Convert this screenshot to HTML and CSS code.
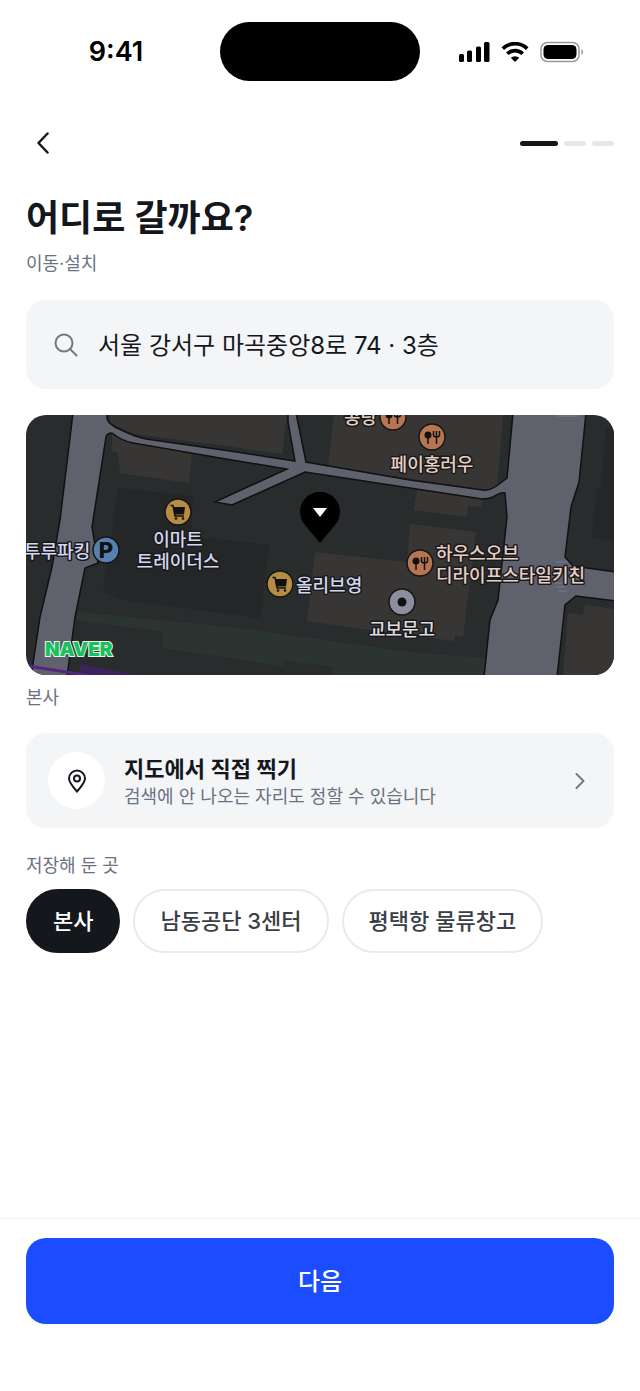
FILE: index.html
```html
<!DOCTYPE html>
<html lang="ko">
<head>
    <meta charset="UTF-8">
    <meta name="viewport" content="width=device-width, initial-scale=1.0">
    <title>어디로 갈까요?</title>
    <link rel="stylesheet" href="styles.css">
</head>
<body>
    <div class="status-bar">
        <span class="time">9:41</span>
        <div class="island"></div>
        <div class="status-icons">
            <svg width="32" height="20" viewBox="0 0 32 20">
                <rect x="1" y="12" width="5" height="8" rx="1.5"/>
                <rect x="9" y="8.5" width="5" height="11.5" rx="1.5"/>
                <rect x="18" y="4.5" width="5" height="15.5" rx="1.5"/>
                <rect x="26" y="0" width="5.5" height="20" rx="1.5"/>
            </svg>
            <svg width="28" height="20" viewBox="0 0 28 20">
                <g fill="none" stroke="#000" stroke-width="3.7">
                    <path d="M1.8 6.6 A17.5 17.5 0 0 1 26.200 6.600"/>
                    <path d="M6.3 11.8 A11 11 0 0 1 21.7 11.8"/>
                </g>
                <path d="M14 20 L9.8 15.8 A6.2 6.2 0 0 1 18.2 15.8 Z"/>
            </svg>
            <svg width="44" height="22" viewBox="0 0 44 22">
                <rect x="1" y="1.5" width="38" height="19" rx="6.5" fill="none" stroke="#999" stroke-width="1.5"/>
                <rect x="3.5" y="4" width="33" height="14" rx="4.5"/>
                <path d="M41.5 8 C43.600 9 43.600 13 41.500 14 Z" fill="#999"/>
            </svg>
        </div>
    </div>

    <header class="header">
        <button class="back-button" aria-label="뒤로">
            <svg width="14" height="22" viewBox="0 0 14 22"><path d="M10.500 1.500 L1.500 11 L10.500 20.500"/></svg>
        </button>
        <div class="steps">
            <span class="step active"></span>
            <span class="step"></span>
            <span class="step"></span>
        </div>
    </header>

    <main class="content">
        <h1>어디로 갈까요?</h1>
        <p class="caption subtitle">이동·설치</p>

        <label class="search-box">
            <svg width="24" height="24" viewBox="0 0 24 24"><circle cx="10" cy="10" r="8.500"/><path d="M16 16 L22.500 22.500"/></svg>
            <input type="text" value="서울 강서구 마곡중앙8로 74 · 3층" aria-label="주소 검색">
        </label>

        <div class="map">
            <svg viewBox="0 0 588 260" preserveAspectRatio="xMidYMid slice" role="img" aria-label="지도">
                <defs>
                    <g id="cart">
                        <circle class="marker" r="13"/>
                        <path class="glyph-line" d="M-7.500 -6.500 H-5 L-3 4 H6"/>
                        <path class="glyph" d="M-5 -5 H7 L6 2.500 H-3.500 Z"/>
                        <circle class="glyph" cx="-2" cy="6.500" r="1.300"/>
                        <circle class="glyph" cx="5" cy="6.500" r="1.300"/>
                    </g>
                    <g id="food">
                        <circle class="marker" r="13"/>
                        <circle class="glyph" cx="-4" cy="-2" r="3.500"/>
                        <path class="glyph-line" d="M-4 0 V7 M4.500 -1 V7 M1.500 -6 V-2 Q1.500 0 4.500 0 Q7.500 0 7.500 -2 V-6 M4.500 -6 V0"/>
                    </g>
                </defs>
                <rect width="588" height="260" fill="#292c2d"/>

                <!-- 건물 -->
                <path class="block-dark" d="M92 73 L167 81 L165 121 L243 130 L234 203 L97 185 L77 177 Z"/>
                <path class="block-dark" d="M580 13 L588 14 V125 L566 123 L571 72 L575 72 Z"/>
                <path class="building" d="M84 0 H261 L256 39 L200 31 L109 19 L84 8 Z"/>
                <path class="building" d="M86 18 L107 28 L166 38 L163 68 L94 58 L92 38 L86 37 Z"/>
                <path class="building" d="M308 0 H477 L471 72 L457 75 L302 51 Z"/>
                <path class="building" d="M391 74 L456 84 L456 92 L442 91 L441 102 L388 95 Z"/>
                <path class="building" d="M289 137 L381 147 L384 109 L450 117 L437 222 L429 220 L428 226 L343 215 L281 206 Z"/>
                <path class="building" d="M542 198 L557 200 L559 190 L588 194 V260 H537 Z"/>
                <path class="green" d="M52 197 L204 212 L384 237 L459 243 V260 H306 L307 252 L258 245 L257 251 L137 233 V217 L50 205 Z"/>

                <!-- 도로 -->
                <path class="road" d="M47 -2 L34 105 L26 152 L14 202 L5 262 H41 L49 202 L59 153 L72 148 L66 112 L80 22 Q81 18 86 18 Q96 26 107 28 L194 43 L261 54 L204 80 L189 87 L206 90 L279 57 L384 73 L456 84 Q462 84 467 82 Q475 77 479 78 L481 102 L472 185 L464 205 L458 262 H531 L539 190 L550 181 L590 186 V157 L547 151 L539 142 L545 92 L553 67 L560 -2 H487 L481 63 L469 72 Q463 76 457 75 L384 65 L280 47 L270 -2 H262 L262 7 L269 46 L204 36 L120 24 Q109 22 89 12 Q81 7 81 3 V-2 Z"/>
                <path class="crossing" d="M530 147 H542 M532 151 H545 M530 155 H540 M529 168 H540 M530 172 H539 M532 176 H541 M531 1 H552"/>
                <path class="subway" d="M54 249 L122 262 H54 Z"/>
                <path class="subway-line" d="M2 251 L65 261"/>

                <!-- 장소 -->
                <g class="poi shop">
                    <use href="#cart" x="152" y="97"/>
                    <text class="middle" x="152" y="131">이마트</text>
                    <text class="middle" x="152" y="153">트레이더스</text>
                    <use href="#cart" x="254" y="169"/>
                    <text x="270" y="177">올리브영</text>
                </g>
                <g class="poi parking">
                    <circle class="marker" cx="80" cy="135" r="13"/>
                    <text class="letter" x="80" y="143">P</text>
                    <text x="-2" y="143">투루파킹</text>
                </g>
                <g class="poi restaurant">
                    <use href="#food" x="367" y="2"/>
                    <text x="318" y="9">콩탕</text>
                    <use href="#food" x="406" y="22"/>
                    <text class="middle" x="406" y="56">페이홍러우</text>
                    <use href="#food" x="394" y="148"/>
                    <text x="410" y="145">하우스오브</text>
                    <text x="410" y="167">디라이프스타일키친</text>
                </g>
                <g class="poi place">
                    <circle class="marker" cx="376" cy="187" r="13"/>
                    <circle class="glyph" cx="376" cy="187" r="4.500"/>
                    <text class="middle" x="376" y="221">교보문고</text>
                </g>

                <path d="M294 128 L279 110 A20 20 0 1 1 309 110 Z" fill="#000"/>
                <path d="M287 93 H301 L294 102 Z" fill="#fff"/>
                <text class="naver" x="19" y="241">NAVER</text>
            </svg>
        </div>
        <p class="caption map-caption">본사</p>

        <button class="pick-card">
            <span class="pick-icon">
                <svg width="20" height="24" viewBox="0 0 20 24"><path d="M10 22.500 C6 18 2 13.500 2 9.500 A8 8 0 0 1 18 9.500 C18 13.500 14 18 10 22.500 Z"/><circle cx="10" cy="9.500" r="3"/></svg>
            </span>
            <span class="pick-text">
                <strong>지도에서 직접 찍기</strong>
                <span class="caption">검색에 안 나오는 자리도 정할 수 있습니다</span>
            </span>
            <svg class="chevron" width="10" height="18" viewBox="0 0 10 18"><path d="M1.500 2 L8.500 9 L1.500 16"/></svg>
        </button>

        <p class="caption saved-title">저장해 둔 곳</p>
        <div class="chips">
            <button class="chip selected">본사</button>
            <button class="chip">남동공단 3센터</button>
            <button class="chip">평택항 물류창고</button>
        </div>
    </main>

    <footer class="footer">
        <button class="next-button">다음</button>
    </footer>
</body>
</html>
```
FILE: styles.css
```css
* {
    box-sizing: border-box;
}
body {
    display: flex;
    flex-direction: column;
    min-height: 100vh;
    margin: 0;
    background-color: #fff;
    color: #14181d;
    font-family: Inter, 'Noto Sans CJK KR', sans-serif;
}
h1, p {
    margin: 0;
}
button, input {
    font-family: inherit;
    color: inherit;
}
button {
    padding: 0;
    border: none;
    cursor: pointer;
}
svg {
    display: block;
    flex: none;
}
.status-bar {
    display: grid;
    grid-template-columns: 1fr 200px 1fr;
    align-items: center;
    padding: 22px 0;
    color: #000;
}
.time {
    padding-left: 12px;
    text-align: center;
    font-size: 27px;
    font-weight: 600;
}
.island {
    height: 59px;
    border-radius: 30px;
    background-color: #000;
}
.status-icons {
    display: flex;
    justify-content: center;
    align-items: center;
    gap: 11px;
    padding-right: 18px;
}
.header {
    display: flex;
    justify-content: space-between;
    align-items: center;
    height: 48px;
    margin-top: 16px;
    padding: 0 26px;
}
.back-button {
    display: flex;
    align-items: center;
    justify-content: center;
    width: 36px;
    height: 48px;
    background: none;
}
.back-button path {
    fill: none;
    stroke: #14181d;
    stroke-width: 2.5;
    stroke-linecap: round;
    stroke-linejoin: round;
}
.steps {
    display: flex;
    gap: 6px;
}
.step {
    width: 22px;
    height: 5px;
    border-radius: 3px;
    background-color: #e6e7ea;
}
.step.active {
    width: 38px;
    background-color: #14181d;
}
.content {
    flex: 1;
    padding: 27px 26px 24px;
}
h1 {
    font-size: 36px;
    font-weight: 600;
    line-height: 48px;
}
.caption {
    color: #6b7280;
    font-size: 18px;
    font-weight: 400;
    line-height: 24px;
}
.subtitle {
    margin-top: 10px;
}
.search-box {
    display: flex;
    align-items: center;
    gap: 20px;
    height: 89px;
    margin-top: 24px;
    padding: 0 28px;
    border-radius: 20px;
    background-color: #f3f5f7;
}
.search-box svg {
    fill: none;
    stroke: #737982;
    stroke-width: 2;
    stroke-linecap: round;
}
.search-box input {
    flex: 1;
    min-width: 0;
    padding: 0 0 2px;
    border: none;
    outline: none;
    background: none;
    font-size: 24px;
}
.map {
    height: 260px;
    margin-top: 26px;
    border-radius: 20px;
    overflow: hidden;
}
.map svg {
    width: 100%;
    height: 100%;
}
.building {
    fill: #383635;
}
.block-dark {
    fill: #242628;
}
.green {
    fill: #2b3431;
}
.road {
    fill: #5f616d;
    stroke: #101112;
    stroke-width: 1.5;
}
.crossing {
    stroke: #7b7d88;
    stroke-width: 1;
}
.subway {
    fill: #3b2459;
}
.subway-line {
    stroke: #552681;
    stroke-width: 3;
}
.marker {
    stroke: #161616;
    stroke-width: 1.5;
}
.glyph {
    fill: #111;
}
.glyph-line {
    fill: none;
    stroke: #111;
    stroke-width: 1.5;
}
.poi text {
    font-size: 18px;
    font-weight: 500;
    stroke: #1a1a1c;
    stroke-width: 3;
    stroke-linejoin: round;
    paint-order: stroke;
}
.poi .middle {
    text-anchor: middle;
}
.shop {
    fill: #b78d45;
}
.shop text, .parking text {
    fill: #d3d7ee;
}
.parking {
    fill: #5680b0;
}
.poi .letter {
    fill: #111;
    stroke: none;
    font-size: 22px;
    font-weight: 800;
    text-anchor: middle;
}
.restaurant {
    fill: #b87552;
}
.restaurant text {
    fill: #e8cfc3;
}
.place {
    fill: #8c8d9d;
}
.place text {
    fill: #dcdce0;
}
.naver {
    fill: #19c15c;
    stroke: #e4f3e9;
    stroke-width: 2;
    paint-order: stroke;
    font-size: 19px;
    font-weight: 900;
}
.map-caption {
    margin-top: 11px;
}
.pick-card {
    display: flex;
    align-items: center;
    width: 100%;
    margin-top: 23px;
    padding: 19px 29px 19px 22px;
    border-radius: 20px;
    background-color: #f3f5f7;
    text-align: left;
}
.pick-icon {
    display: flex;
    align-items: center;
    justify-content: center;
    width: 57px;
    height: 57px;
    margin-right: 19px;
    border-radius: 50%;
    background-color: #fff;
}
.pick-icon svg {
    fill: none;
    stroke: #14181d;
    stroke-width: 2;
}
.pick-text {
    display: flex;
    flex: 1;
    flex-direction: column;
}
.pick-text strong {
    font-size: 22px;
    font-weight: 600;
    line-height: 32px;
}
.chevron {
    fill: none;
    stroke: #737982;
    stroke-width: 2;
    stroke-linecap: round;
    stroke-linejoin: round;
}
.saved-title {
    margin-top: 26px;
}
.chips {
    display: flex;
    flex-wrap: wrap;
    gap: 13px;
    margin-top: 11px;
}
.chip {
    height: 64px;
    padding: 0 25px 4px;
    border: 2px solid #e9eaec;
    border-radius: 32px;
    background-color: #fff;
    color: #3a3f47;
    font-size: 22px;
    font-weight: 500;
}
.chip.selected {
    border-color: #14181d;
    background-color: #14181d;
    color: #fff;
}
.footer {
    padding: 19px 26px 67px;
    border-top: 1px solid #f1f2f4;
}
.next-button {
    width: 100%;
    height: 86px;
    padding-bottom: 4px;
    border-radius: 20px;
    background-color: #1b4dff;
    color: #fff;
    font-size: 24px;
    font-weight: 500;
}
```
